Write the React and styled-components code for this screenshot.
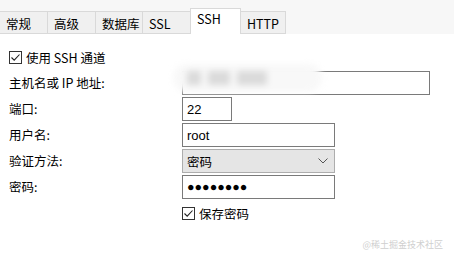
import React from 'react';
import styled, { createGlobalStyle } from 'styled-components';

const GlobalStyle = createGlobalStyle`
  html, body {
    margin: 0;
    padding: 0;
    background: #ffffff;
  }
  body {
    font-family: "Noto Sans CJK SC", "Liberation Sans", sans-serif;
    font-size: 12px;
    color: #000;
  }
`;

const Page = styled.div`
  width: 454px;
  height: 254px;
  position: relative;
  overflow: hidden;
  background: #fff;
`;

const TabBar = styled.div`
  display: flex;
  align-items: flex-end;
  height: 34px;
  background: #f7f7f7;
  box-sizing: border-box;
`;

const Tab = styled.div`
  box-sizing: border-box;
  width: ${(p) => p.w}px;
  height: ${(p) => (p.active ? 26 : 23)}px;
  padding-left: 6px;
  padding-top: ${(p) => (p.active ? 2 : 4)}px;
  background: ${(p) => (p.active ? '#ffffff' : '#f0f0f0')};
  border: 1px solid #d9d9d9;
  border-left: ${(p) => (p.first ? 'none' : '1px solid #d9d9d9')};
  border-bottom: ${(p) => (p.active ? 'none' : '1px solid #d9d9d9')};
  margin-right: -1px;
  font-size: 12.5px;
  line-height: 16px;
  white-space: nowrap;
`;

const Body = styled.div`
  padding: 15px 0 0 9px;
  display: flex;
  flex-direction: column;
`;

const CheckRow = styled.label`
  display: flex;
  align-items: center;
  gap: 4px;
  height: 16px;
  font-size: 12.5px;
`;

const Box = styled.span`
  width: 13px;
  height: 13px;
  box-sizing: border-box;
  border: 1px solid #333;
  display: inline-flex;
  align-items: center;
  justify-content: center;
  background: #fff;
`;

const Form = styled.div`
  display: grid;
  grid-template-columns: 173px auto;
  row-gap: 2px;
  margin-top: 6px;
  justify-items: start;
  align-items: center;
`;

const Label = styled.div`
  font-size: 12.5px;
  line-height: 24px;
`;

const Field = styled.div`
  position: relative;
  box-sizing: border-box;
  width: ${(p) => p.w}px;
  height: 24px;
  border: 1px solid ${(p) => (p.select ? '#adadad' : '#7a7a7a')};
  background: ${(p) => (p.select ? '#e5e5e5' : '#ffffff')};
  padding-left: 4px;
  display: flex;
  align-items: center;
  justify-content: space-between;
  font-size: 13px;
  font-family: "Liberation Sans", "Noto Sans CJK SC", sans-serif;
`;

const Blur = styled.div`
  position: absolute;
  left: -10px;
  top: -8px;
  width: 135px;
  height: 28px;
  display: flex;
  align-items: center;
  gap: 7px;
  padding-left: 14px;
  background: #f8f8f8;
  filter: blur(3px);
  border-radius: 14px;
`;

const Smudge = styled.span`
  width: ${(p) => p.w}px;
  height: 14px;
  background: #dadada;
`;

const Dots = styled.span`
  font-size: 12.5px;
  letter-spacing: 0px;
`;

const Chevron = styled.svg`
  margin-right: 6px;
`;

const SaveRow = styled.div`
  margin-top: 4px;
`;

const Watermark = styled.div`
  position: absolute;
  right: 11px;
  bottom: 3px;
  font-size: 9px;
  color: #cfcfcf;
`;

const CheckMark = () => (
  <svg width="11" height="11" viewBox="0 0 11 11">
    <path d="M1.5 5.5 L4.2 8.2 L9.5 2.5" fill="none" stroke="#222" strokeWidth="1.1" />
  </svg>
);

const tabs = [
  { name: '常规', w: 48 },
  { name: '高级', w: 49 },
  { name: '数据库', w: 48 },
  { name: 'SSL', w: 49 },
  { name: 'SSH', w: 51, active: true },
  { name: 'HTTP', w: 46 },
];

const App = () => {
  return (
    <Page>
      <GlobalStyle />
      <TabBar>
        {tabs.map((t, i) => (
          <Tab key={t.name} w={t.w} active={t.active} first={i === 0}>
            {t.name}
          </Tab>
        ))}
      </TabBar>
      <Body>
        <CheckRow>
          <Box>
            <CheckMark />
          </Box>
          使用 SSH 通道
        </CheckRow>
        <Form>
          <Label>主机名或 IP 地址:</Label>
          <Field w={248}>
            <Blur>
              <Smudge w={14} />
              <Smudge w={22} />
              <Smudge w={30} />
            </Blur>
          </Field>
          <Label>端口:</Label>
          <Field w={50}>22</Field>
          <Label>用户名:</Label>
          <Field w={153}>root</Field>
          <Label>验证方法:</Label>
          <Field w={153} select>
            <span style={{ fontFamily: '"Noto Sans CJK SC", sans-serif', fontSize: 12.5 }}>密码</span>
            <Chevron width="10" height="6" viewBox="0 0 10 6">
              <path d="M0.5 0.5 L5 5 L9.5 0.5" fill="none" stroke="#555" strokeWidth="1" />
            </Chevron>
          </Field>
          <Label>密码:</Label>
          <Field w={153}>
            <Dots>●●●●●●●●</Dots>
          </Field>
          <span />
          <SaveRow>
            <CheckRow>
              <Box>
                <CheckMark />
              </Box>
              保存密码
            </CheckRow>
          </SaveRow>
        </Form>
      </Body>
      <Watermark>@稀土掘金技术社区</Watermark>
    </Page>
  );
};

export default App;
